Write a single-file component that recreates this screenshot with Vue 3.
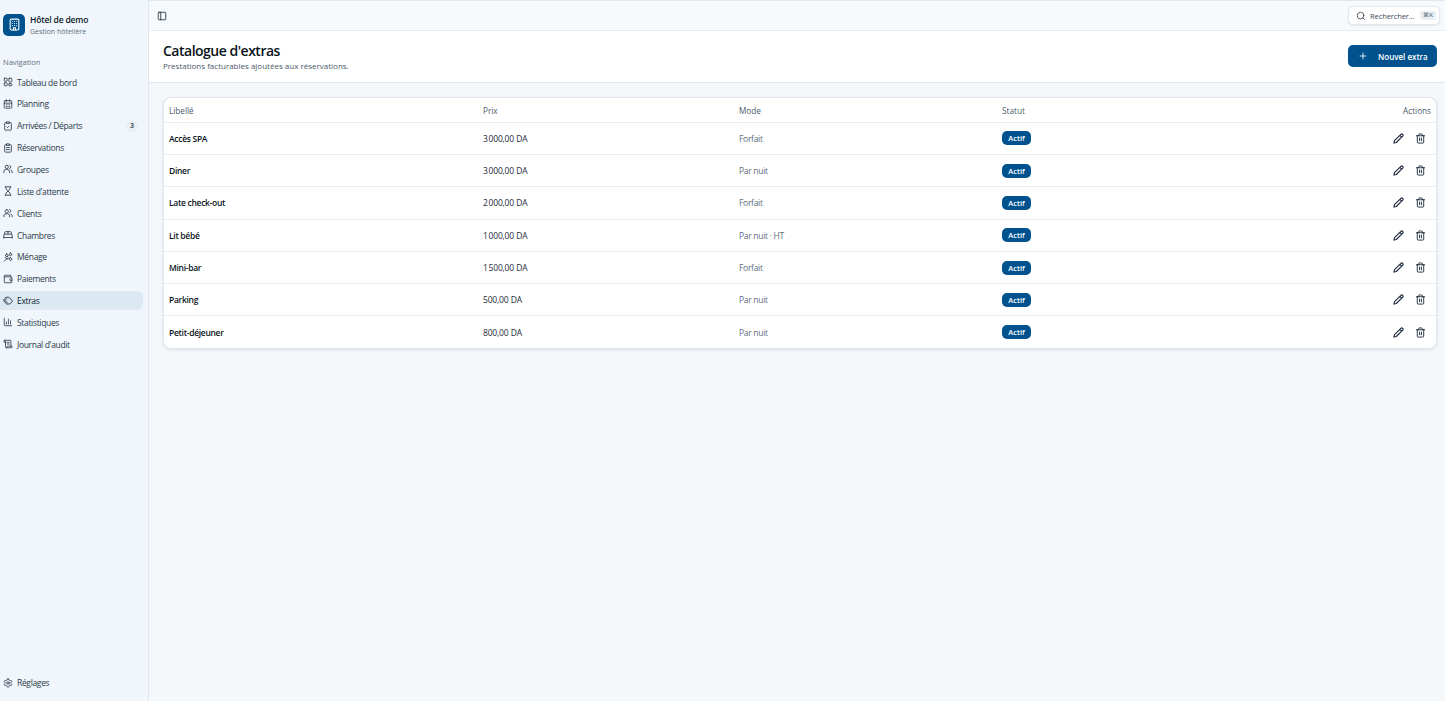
<script setup>
const navItems = [
  { label: 'Tableau de bord', icon: 'M4 3h5a1 1 0 0 1 1 1v5a1 1 0 0 1-1 1H4a1 1 0 0 1-1-1V4a1 1 0 0 1 1-1zM15 3h5a1 1 0 0 1 1 1v7a1 1 0 0 1-1 1h-5a1 1 0 0 1-1-1V4a1 1 0 0 1 1-1zM4 14h5a1 1 0 0 1 1 1v5a1 1 0 0 1-1 1H4a1 1 0 0 1-1-1v-5a1 1 0 0 1 1-1zM15 16h5a1 1 0 0 1 1 1v3a1 1 0 0 1-1 1h-5a1 1 0 0 1-1-1v-3a1 1 0 0 1 1-1z' },
  { label: 'Planning', icon: 'M8 2v4M16 2v4M5 4h14a2 2 0 0 1 2 2v14a2 2 0 0 1-2 2H5a2 2 0 0 1-2-2V6a2 2 0 0 1 2-2zM3 10h18M8 14h2M14 14h2M8 18h2M14 18h2' },
  { label: 'Arrivées / Départs', icon: 'M9 2h6v4H9zM9 4H6a2 2 0 0 0-2 2v14a2 2 0 0 0 2 2h12a2 2 0 0 0 2-2V6a2 2 0 0 0-2-2h-3M9 14l2 2 4-4', badge: 3 },
  { label: 'Réservations', icon: 'M9 2h6v4H9zM9 4H6a2 2 0 0 0-2 2v14a2 2 0 0 0 2 2h12a2 2 0 0 0 2-2V6a2 2 0 0 0-2-2h-3M8 11h8M8 16h8' },
  { label: 'Groupes', icon: 'M2 21v-2a6 6 0 0 1 6-6h2a6 6 0 0 1 6 6v2M9 3a4 4 0 1 1 0 8 4 4 0 0 1 0-8M16 3.2a4 4 0 0 1 0 7.6M22 21v-2a5 5 0 0 0-3-4.6' },
  { label: "Liste d'attente", icon: 'M5 2h14M5 22h14M7 2v5l5 5 5-5V2M7 22v-5l5-5 5 5v5' },
  { label: 'Clients', icon: 'M2 21v-2a5 5 0 0 1 5-5h4a5 5 0 0 1 5 5v2M9 4a4 4 0 1 1 0 8 4 4 0 0 1 0-8M16 3.2a4 4 0 0 1 0 7.6M22 21v-2a5 5 0 0 0-3-4.6' },
  { label: 'Chambres', icon: 'M2 20v-8a2 2 0 0 1 2-2h16a2 2 0 0 1 2 2v8M4 10V6a2 2 0 0 1 2-2h12a2 2 0 0 1 2 2v4M12 4v6M2 18h20' },
  { label: 'Ménage', icon: 'M3 22l7-7M10 11l3 3-3 4-4-4zM9 4l1.5 2.5L13 8l-2.5 1.5L9 12 7.500 9.500 5 8l2.500-1.500zM18 2l1.500 2.500L22 6l-2.500 1.500L18 10l-1.500-2.500L14 6l2.500-1.500zM18 13l1.500 2.500L22 17l-2.500 1.500L18 21l-1.500-2.500L14 17l2.500-1.500z' },
  { label: 'Paiements', icon: 'M19 7V4a1 1 0 0 0-1-1H5a2 2 0 0 0 0 4h15a1 1 0 0 1 1 1v4h-3a2 2 0 0 0 0 4h3a1 1 0 0 0 1-1v-2a1 1 0 0 0-1-1M3 5v14a2 2 0 0 0 2 2h15a1 1 0 0 0 1-1v-4' },
  { label: 'Extras', icon: 'M10 3h4l7.500 7.500a2.400 2.400 0 0 1 0 3.400l-5 5a2.400 2.400 0 0 1-3.400 0L5.500 11.500A2 2 0 0 1 5 10V6a3 3 0 0 1 3-3zM2 9v3l8 8.500M9.500 7.500h.01', active: true },
  { label: 'Statistiques', icon: 'M3 3v16a2 2 0 0 0 2 2h16M8 17v-5M13 17V5M18 17V9' },
  { label: "Journal d'audit", icon: 'M15 12h-5M15 8h-5M19 17V5a2 2 0 0 0-2-2H4M8 21h12a2 2 0 0 0 2-2v-1a1 1 0 0 0-1-1H11a1 1 0 0 0-1 1v1a2 2 0 1 1-4 0V5a2 2 0 1 0-4 0v2a1 1 0 0 0 1 1h3' },
]

const extras = [
  { label: 'Accès SPA', price: '3\u202f000,00 DA', mode: 'Forfait' },
  { label: 'Diner', price: '3\u202f000,00 DA', mode: 'Par nuit' },
  { label: 'Late check-out', price: '2\u202f000,00 DA', mode: 'Forfait' },
  { label: 'Lit bébé', price: '1\u202f000,00 DA', mode: 'Par nuit · HT' },
  { label: 'Mini-bar', price: '1\u202f500,00 DA', mode: 'Forfait' },
  { label: 'Parking', price: '500,00 DA', mode: 'Par nuit' },
  { label: 'Petit-déjeuner', price: '800,00 DA', mode: 'Par nuit' },
]
</script>

<template>
  <div class="layout">
    <aside class="sidebar">
      <div class="brand">
        <div class="brand-logo">
          <svg viewBox="0 0 24 24" width="13" height="13" fill="none" stroke="#fff" stroke-width="2" stroke-linecap="round" stroke-linejoin="round">
            <rect x="4" y="2" width="16" height="20" rx="2" />
            <path d="M10 22v-4h4v4M8 6h.01M12 6h.01M16 6h.01M8 10h.01M12 10h.01M16 10h.01M8 14h.01M12 14h.01M16 14h.01" />
          </svg>
        </div>
        <div class="brand-text">
          <div class="brand-name">Hôtel de demo</div>
          <div class="brand-sub">Gestion hôtelière</div>
        </div>
      </div>

      <div class="nav-title">Navigation</div>
      <nav class="nav">
        <a v-for="item in navItems" :key="item.label" class="nav-item" :class="{ active: item.active }">
          <svg class="nav-icon" viewBox="0 0 24 24" fill="none" stroke="currentColor" stroke-width="2" stroke-linecap="round" stroke-linejoin="round">
            <path :d="item.icon" />
          </svg>
          <span>{{ item.label }}</span>
          <span v-if="item.badge" class="nav-badge">{{ item.badge }}</span>
        </a>
      </nav>

      <a class="nav-item settings">
        <svg class="nav-icon" viewBox="0 0 24 24" fill="none" stroke="currentColor" stroke-width="2" stroke-linecap="round" stroke-linejoin="round">
          <path d="M12.200 2h-.4a2 2 0 0 0-2 2v.2a2 2 0 0 1-1 1.700l-.4.3a2 2 0 0 1-2 0l-.2-.1a2 2 0 0 0-2.700.7l-.2.4a2 2 0 0 0 .7 2.700l.2.1a2 2 0 0 1 1 1.700v.6a2 2 0 0 1-1 1.700l-.2.1a2 2 0 0 0-.7 2.700l.2.4a2 2 0 0 0 2.700.7l.2-.1a2 2 0 0 1 2 0l.4.3a2 2 0 0 1 1 1.700v.2a2 2 0 0 0 2 2h.4a2 2 0 0 0 2-2v-.2a2 2 0 0 1 1-1.700l.4-.3a2 2 0 0 1 2 0l.2.1a2 2 0 0 0 2.700-.7l.2-.4a2 2 0 0 0-.7-2.700l-.2-.1a2 2 0 0 1-1-1.700v-.6a2 2 0 0 1 1-1.700l.2-.1a2 2 0 0 0 .7-2.700l-.2-.4a2 2 0 0 0-2.700-.7l-.2.1a2 2 0 0 1-2 0l-.4-.3a2 2 0 0 1-1-1.700V4a2 2 0 0 0-2-2z" />
          <circle cx="12" cy="12" r="3" />
        </svg>
        <span>Réglages</span>
      </a>
    </aside>

    <div class="main">
      <header class="topbar">
        <svg class="toggle" viewBox="0 0 24 24" fill="none" stroke="currentColor" stroke-width="2" stroke-linecap="round" stroke-linejoin="round">
          <rect x="3" y="3" width="18" height="18" rx="2" />
          <path d="M9 3v18" />
        </svg>
        <button class="search">
          <svg class="search-icon" viewBox="0 0 24 24" fill="none" stroke="currentColor" stroke-width="2" stroke-linecap="round">
            <circle cx="11" cy="11" r="8" />
            <path d="M21 21l-4.300-4.300" />
          </svg>
          <span class="search-label">Rechercher...</span>
          <kbd class="search-key">⌘K</kbd>
        </button>
      </header>

      <section class="page-head">
        <div>
          <h1>Catalogue d'extras</h1>
          <p>Prestations facturables ajoutées aux réservations.</p>
        </div>
        <button class="btn-new">
          <svg viewBox="0 0 24 24" width="10" height="10" fill="none" stroke="currentColor" stroke-width="2" stroke-linecap="round">
            <path d="M5 12h14M12 5v14" />
          </svg>
          <span>Nouvel extra</span>
        </button>
      </section>

      <div class="content">
        <div class="card">
          <div class="row head">
            <div>Libellé</div>
            <div>Prix</div>
            <div>Mode</div>
            <div>Statut</div>
            <div class="right">Actions</div>
          </div>
          <div v-for="extra in extras" :key="extra.label" class="row">
            <div class="name">{{ extra.label }}</div>
            <div class="price">{{ extra.price }}</div>
            <div class="mode">{{ extra.mode }}</div>
            <div><span class="status">Actif</span></div>
            <div class="actions">
              <svg viewBox="0 0 24 24" width="11" height="11" fill="none" stroke="currentColor" stroke-width="2.4" stroke-linecap="round" stroke-linejoin="round">
                <path d="M21.200 6.800a2.800 2.800 0 0 0-4-4L3.800 16.200a2 2 0 0 0-.5.8l-1.300 4.400a.5.5 0 0 0 .6.6l4.400-1.300a2 2 0 0 0 .8-.5zM15 5l4 4" />
              </svg>
              <svg viewBox="0 0 24 24" width="11" height="11" fill="none" stroke="currentColor" stroke-width="2" stroke-linecap="round" stroke-linejoin="round">
                <path d="M3 6h18M19 6v14a2 2 0 0 1-2 2H7a2 2 0 0 1-2-2V6M8 6V4a2 2 0 0 1 2-2h4a2 2 0 0 1 2 2v2M10 11v6M14 11v6" />
              </svg>
            </div>
          </div>
        </div>
      </div>
    </div>
  </div>
</template>

<style>
html, body { margin: 0; background: #f4f8fb; }
</style>

<style scoped>
.layout {
  display: flex;
  height: 701px;
  font-family: 'Open Sans', 'Noto Sans', sans-serif;
  color: #0c1a2a;
  overflow: hidden;
}

.sidebar {
  width: 148px; flex-shrink: 0;
  display: flex; flex-direction: column;
  background: #f0f6fb;
  border-right: 1px solid #e0e7ee;
  padding-top: 13px;
}

.brand { display: flex; align-items: center; gap: 5px; padding-left: 3px; height: 23px; }
.brand-logo {
  width: 22px; height: 22px; border-radius: 5px;
  background: #00528f;
  display: flex; align-items: center; justify-content: center;
}
.brand-text { margin-top: 1px; }
.brand-name { font-size: 8.5px; font-weight: 600; line-height: 12px; letter-spacing: -.15px; }
.brand-sub { font-size: 7px; color: #5f6f80; line-height: 11px; }

.nav-title { font-size: 7.5px; color: #5f6f80; padding-left: 3px; margin-top: 21px; line-height: 11px; }

.nav { display: flex; flex-direction: column; gap: 2.87px; margin-top: 4.500px; }
.nav-item {
  display: flex; align-items: center; gap: 4px;
  height: 19px; padding-left: 3px; margin-right: 5px;
  font-size: 8.5px; letter-spacing: -.33px; color: #2c3b4c;
  border-radius: 0 6px 6px 0;
}
.nav-item.active { background: #dce9f3; color: #0c1a2a; }
.nav-icon { width: 10px; height: 10px; flex-shrink: 0; }
.nav-badge {
  margin-left: auto; margin-right: 5px;
  width: 12px; height: 12px; border-radius: 6px;
  background: #e8eff5;
  font-size: 7px; font-weight: 600; letter-spacing: 0;
  display: flex; align-items: center; justify-content: center;
}
.settings { margin-top: auto; margin-bottom: 9px; }

.main { flex: 1; min-width: 0; display: flex; flex-direction: column; }

.topbar {
  height: 29px; flex-shrink: 0;
  display: flex; align-items: center; justify-content: space-between;
  padding: 0 5px 0 8px;
  background: #f6fafd;
  border-top: 1px solid #e0e7ee;
}
.toggle { width: 10px; height: 10px; color: #1c2a3a; }
.search {
  display: flex; align-items: center; gap: 4px;
  width: 92px; height: 19px; padding: 0 3px 0 7px;
  box-sizing: border-box;
  background: #fff;
  border: 1px solid #e0e7ee; border-radius: 5px;
  box-shadow: 0 1px 2px rgba(0, 0, 0, .08);
  font-family: inherit; color: #3c4a5a;
}
.search-icon { width: 10px; height: 10px; flex-shrink: 0; }
.search-label { font-size: 7.5px; letter-spacing: -.1px; white-space: nowrap; }
.search-key {
  margin-left: auto; padding: 0 3px;
  background: #e8eff5; border-radius: 2px;
  font-family: inherit; font-size: 6px; line-height: 9px;
}

.page-head {
  height: 53px; flex-shrink: 0; box-sizing: border-box;
  display: flex; align-items: center; justify-content: space-between;
  padding: 0 8px 1px 14px;
  background: #fff;
  border-top: 1px solid #e6ecf1;
  border-bottom: 1px solid #e0e7ee;
}
.page-head h1 { margin: 0; font-size: 14px; font-weight: 600; line-height: 18px; letter-spacing: -.5px; color: #0a1420; }
.page-head p { margin: 0; font-size: 8px; line-height: 11px; color: #4c5a6a; }

.btn-new {
  width: 89px; height: 22px;
  display: flex; align-items: center; gap: 10px;
  padding: 0 0 0 10px;
  background: #00528f; color: #fff;
  border: 0; border-radius: 5px;
  font-family: inherit; font-size: 8px; font-weight: 600;
}

.content { flex: 1; padding: 14px 8px 0 14px; }

.card {
  background: #fff;
  border: 1px solid #e0e7ee; border-radius: 8px;
  box-shadow: 0 1px 3px rgba(0, 0, 0, .1);
  overflow: hidden;
}

.row {
  display: grid;
  grid-template-columns: 314px 256px 263px 1fr 120px;
  align-items: center;
  height: 32.3px; box-sizing: border-box;
  padding: 0 5px;
  font-size: 8.5px; letter-spacing: -.3px;
  border-top: 1px solid #e6ecf1;
}
.row.head { height: 23.7px; padding-top: 1px; border-top: 0; font-size: 8.2px; letter-spacing: 0; color: #4c5a6a; }
.right { text-align: right; }
.name { font-weight: 600; color: #0a1420; }
.price { color: #1c2a3a; letter-spacing: -.2px; word-spacing: .5px; }
.mode { color: #5f6f80; }

.status {
  display: inline-flex; align-items: center; justify-content: center;
  width: 29px; height: 14px; border-radius: 5px;
  background: #00528f; color: #fff;
  font-size: 7.5px; font-weight: 600; letter-spacing: 0;
}

.actions { display: flex; justify-content: flex-end; gap: 11px; padding-right: 5px; color: #1c2a3a; }
</style>
